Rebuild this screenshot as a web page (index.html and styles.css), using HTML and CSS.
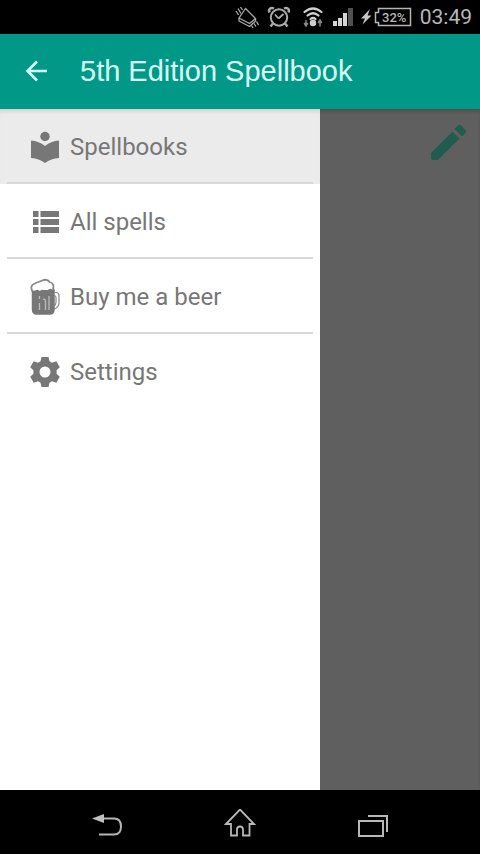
FILE: index.html
```html
<!DOCTYPE html>
<html lang="en">
<head>
<meta charset="utf-8">
<meta name="viewport" content="width=device-width, initial-scale=1">
<title>5th Edition Spellbook</title>
<link rel="stylesheet" href="styles.css">
</head>
<body>
<div class="status">
  <svg width="24" height="24" viewBox="0 0 24 24" fill="none" stroke="#aaa" stroke-width="1.300" stroke-linejoin="round" aria-hidden="true"><path d="M10.500 3.500 20.500 13.500 14.500 18.500 4 13z"/><path d="M4 13v3l10.500 5.500 6-5.500v-2.500"/><path d="M1 6l2.500 4M3 3.500l3 5M5.500 2l2 3M16.500 20.500l1.500 2.500M19 18.500l2 3M21.500 16.500l2 3.500"/></svg>
  <svg width="28" height="28" viewBox="0 0 28 28" fill="none" stroke="#aaa" stroke-width="2" aria-hidden="true"><circle cx="14" cy="14.500" r="8.200"/><path d="M13.500 15.500 18.500 11M13.500 15.500 10 11.500" stroke-width="1.800"/><path d="M4.500 9.500C3 6 6 4 9 5.500M23.500 9.500C25 6 22 4 19 5.500M8 20.500 5.500 23.500M20 20.500l2.500 3" stroke-width="2.500"/></svg>
  <svg width="28" height="28" viewBox="0 0 28 28" fill="none" stroke="#d0d0d0" stroke-width="2.200" stroke-linecap="round" aria-hidden="true"><path d="M5.500 9q8.500-7 17 0M8.500 12.500q5.500-4.500 11 0M11.500 16q2.500-2 5 0"/><circle cx="14" cy="20" r="3.200" fill="#d0d0d0" stroke="none"/><path d="M7 17.500v5M5.500 20.500 7 23l1.500-2.500M21 23v-5M19.500 19.500 21 17l1.500 2.500" stroke="#888" stroke-width="1.500"/></svg>
  <svg width="21" height="20" viewBox="0 0 21 20" fill="#d4d4d4" aria-hidden="true"><path d="M0 14h4v5H0zM5 11h4v8H5zM10 6h4v13h-4z"/><path d="M15 1h5v18h-5z" fill="#505050"/></svg>
  <div class="power">
    <svg width="12" height="18" viewBox="0 0 12 18" fill="#c8c8c8" aria-hidden="true"><path d="M10 1 1 10.500h4L2.500 16.500 11.500 7.500H7.500z"/></svg>
    <div class="battery"><svg class="shell" width="38" height="20" viewBox="0 0 38 20" fill="none" stroke="#b5b5b5" stroke-width="1.500" aria-hidden="true"><path d="M4.500 1.500h32v17h-32v-3h-3v-10h3z"/></svg><span>32%</span></div>
  </div>
  <time class="clock">03:49</time>
</div>
<header class="bar">
  <button class="back" aria-label="Back"><svg width="24" height="24" viewBox="0 0 24 24" fill="none" stroke="#d8fff8" stroke-width="2.500"><path d="M23 11H4M13 1.500 3.500 11l9.500 9.500"/></svg></button>
  <h1>5th Edition Spellbook</h1>
</header>
<main class="content">
  <nav class="drawer" aria-label="Main menu">
    <a class="item selected" href="#spellbooks"><svg width="32" height="32" viewBox="0 0 32 32" fill="#777" aria-hidden="true"><circle cx="16" cy="5.500" r="4.700"/><path d="M2 9.500q8 .5 14 5.500 6-5 14-5.500v17.500q-8 .5-14 5-6-4.500-14-5z"/></svg><span>Spellbooks</span></a>
    <a class="item" href="#spells"><svg width="32" height="32" viewBox="0 0 32 32" fill="#777" aria-hidden="true"><path d="M4 5h5.500v6H4zM11.500 5H30v6H11.500zM4 13h5.500v6H4zM11.500 13H30v6H11.500zM4 21h5.500v6H4zM11.500 21H30v6H11.500z"/></svg><span>All spells</span></a>
    <a class="item" href="#beer"><svg width="32" height="38" viewBox="0 0 32 38" fill="none" stroke="#777" stroke-width="1.500" stroke-linejoin="round" aria-hidden="true"><path d="M3.500 13.500C1.500 10 2 6.500 6 5.500 8 4 11 4 13 2.500c4-1.500 6-1 7.500 1.500 4 1 4.500 4 3.500 6.500 1 1 1 2 1 3" stroke="#888" stroke-width="1.800"/><path d="M3.500 13.500q2.500 0 5-1 2 2 4.500 0 5 1 8-1l4 1.500V31q0 5-4 5H7.500q-4 0-4-5z" fill="#777"/><path d="M10.500 18v3M10.500 25v7M14 21.500q2.500-1 2.500 2V32M20 18v14" stroke="#bbb" stroke-width="1.300"/><path d="M25 14.500h2q3 0 3 3V25q0 4-5 6.500M25 17.500q2 0 2 2v5q0 2-2 3.500" stroke="#888" stroke-width="1.200"/></svg><span>Buy me a beer</span></a>
    <a class="item" href="#settings"><svg width="32" height="32" viewBox="0 0 32 32" aria-hidden="true"><path fill="#777" fill-rule="evenodd" d="M12.500 1h7l1 4.200 2.500 1.500 4.300-1.500 3.500 6-3.200 3v3.600l3.200 3-3.500 6-4.300-1.500-2.500 1.500-1 4.200h-7l-1-4.200L9 25.300l-4.300 1.500-3.500-6 3.200-3v-3.600l-3.200-3 3.500-6L9 6.700l2.500-1.500zM16 10.500a5.500 5.500 0 1 0 0 11 5.500 5.500 0 1 0 0-11z"/></svg><span>Settings</span></a>
  </nav>
  <div class="scrim">
    <button class="edit" aria-label="Edit"><svg width="40" height="40" viewBox="0 0 40 40" fill="#205c50"><path d="M3 31 24.500 9.500 31.500 16.500 10 38H5.500Q3 38 3 35.500zM26.500 7 30 3.500q1.500-1.500 3 0l4.500 4.500q1.500 1.500 0 3L34 14.500z"/></svg></button>
  </div>
</main>
<footer class="keys">
  <button aria-label="System back"><svg width="32" height="32" viewBox="0 0 32 32"><path d="M12 9.500h11q7 0 7 8t-7 8H8" fill="none" stroke="#b5b5b5" stroke-width="2"/><path d="M1 9.500 13 5v9z" fill="#c0c0c0"/></svg></button>
  <button aria-label="Home"><svg width="32" height="32" viewBox="0 0 32 32" fill="none" stroke="#b8b8b8" stroke-width="2"><path d="M2 15 16 .5 30 15h-4.500v11.500H19v-6q0-3-3-3t-3 3v6H7V15z" stroke-width="1.800"/></svg></button>
  <button aria-label="Recent apps"><svg width="32" height="32" viewBox="0 0 32 32" fill="none" stroke="#b8b8b8" stroke-width="2"><path d="M2 12h24v15H2zM11 7h19v16"/></svg></button>
</footer>
</body>
</html>
```
FILE: styles.css
```css
* {
  box-sizing: border-box;
}

body {
  margin: 0;
  min-height: 100vh;
  display: flex;
  flex-direction: column;
  background: #000;
  font-family: Roboto, sans-serif;
}

button {
  display: flex;
  padding: 0;
  border: 0;
  background: none;
}

svg {
  display: block;
  flex-shrink: 0;
}

.status {
  height: 34px;
  padding-right: 8px;
  display: flex;
  align-items: center;
  justify-content: flex-end;
  gap: 6px;
  color: #b8b8b8;
}

.power {
  display: flex;
  align-items: center;
  gap: 2px;
}

.battery {
  display: grid;
  place-items: center;
  font-size: 13px;
  font-weight: 500;
}

.battery > * {
  grid-area: 1 / 1;
}

.battery span {
  padding-left: 3px;
}

.clock {
  margin-left: 2px;
  font-size: 21px;
}

.bar {
  height: 75px;
  padding: 0 24px;
  display: flex;
  align-items: center;
  gap: 32px;
  background: #029888;
  color: #d8fff8;
}

.bar h1 {
  margin: 0;
  font: 400 29px "Liberation Sans", sans-serif;
}

.content {
  flex: 1;
  display: flex;
  background: #5f5f5f;
  box-shadow: inset 0 4px 4px -2px #0003;
}

.drawer {
  width: 66.7%;
  background: #fff;
}

.item {
  height: 75px;
  padding-left: 29px;
  display: flex;
  align-items: center;
  gap: 9px;
  color: #777;
  font-size: 24px;
  text-decoration: none;
}

.item:not(:last-child) {
  background: linear-gradient(#d8d8d8, #d8d8d8) 50% 100% / calc(100% - 14px) 2px no-repeat;
}

.item.selected {
  background-color: #ebebeb;
  box-shadow: inset 0 5px 4px -3px #0002;
}

.scrim {
  flex: 1;
  padding: 13px 12px;
  display: flex;
  justify-content: flex-end;
  align-items: flex-start;
}

.keys {
  height: 64px;
  padding: 6px 40px 0;
  display: grid;
  grid-template-columns: repeat(3, 1fr);
  place-items: center;
}
```
